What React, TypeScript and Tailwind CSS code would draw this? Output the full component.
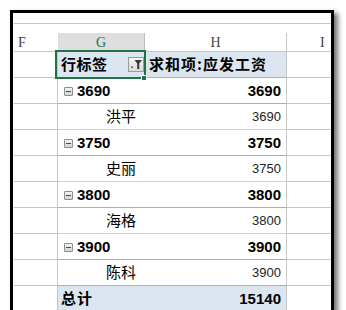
import React from "react";

type Row = { label: string; value: string; kind: "group" | "item" | "total" };

const rows: Row[] = [
  { label: "3690", value: "3690", kind: "group" },
  { label: "洪平", value: "3690", kind: "item" },
  { label: "3750", value: "3750", kind: "group" },
  { label: "史丽", value: "3750", kind: "item" },
  { label: "3800", value: "3800", kind: "group" },
  { label: "海格", value: "3800", kind: "item" },
  { label: "3900", value: "3900", kind: "group" },
  { label: "陈科", value: "3900", kind: "item" },
  { label: "总计", value: "15140", kind: "total" },
];

const cjk = "font-['Noto_Sans_CJK_SC',sans-serif]";

function MinusBox() {
  return (
    <span className="mr-[4px] flex h-[9px] w-[9px] items-center justify-center rounded-[1px] border border-[#8d8d8d] bg-gradient-to-b from-[#f2f2f2] to-[#d4d4d4]">
      <span className="h-[1px] w-[5px] bg-[#4a4a4a]" />
    </span>
  );
}

function FilterButton() {
  return (
    <span className="flex h-[15px] w-[16px] items-center justify-center border border-[#9b9b9b] bg-gradient-to-b from-[#f6f6f6] to-[#dadada]">
      <svg width="14" height="13" viewBox="0 0 14 13">
        <path d="M1.5 8.5 L4.5 8.5 L3 10.5 Z" fill="#555" />
        <path d="M5.5 2 L13 2 L10.3 5.5 L10.3 11 L8.2 11 L8.2 5.5 Z" fill="#3c3c3c" />
      </svg>
    </span>
  );
}

export default function App() {
  return (
    <div className="h-[310px] w-[346px] overflow-hidden bg-white">
      <div className="ml-[10px] mt-[10px] w-[324px] border-l-[3px] border-r-[3px] border-t-[3px] border-black bg-white shadow-[4px_3px_5px_rgba(0,0,0,0.55)]">
        {/* formula bar gap */}
        <div className="h-[11px] border-b border-[#c6c6c6]" />
        <div className="h-[9px]" />

        {/* column headers */}
        <div className="flex h-[19px] border-b border-[#c6c6c6] font-['Liberation_Serif',serif] text-[14px] text-[#444]">
          <div className="flex w-[45px] items-center pl-[5px]">F</div>
          <div className="flex w-[87px] items-center justify-center border-r border-[#bdbdbd] bg-[#dedede] text-[#217346]">G</div>
          <div className="flex w-[142px] items-center justify-center border-r border-[#c6c6c6]">H</div>
          <div className="flex w-[44px] items-center pl-[33px]">I</div>
        </div>

        {/* pivot header row */}
        <div className={`relative flex h-[26px] ${cjk} text-[15px] font-bold text-black`}>
          <div className="w-[45px] border-b border-r border-[#c6c6c6]" />
          <div className="flex w-[87px] items-center justify-between border-b border-[#95b3d7] bg-[#dce6f1] pl-[3px] pr-[1px] tracking-[0.5px]">
            <span>行标签</span>
            <FilterButton />
          </div>
          <div className="flex w-[142px] items-center border-b border-r border-[#95b3d7] border-r-[#c6c6c6] bg-[#dce6f1] pl-[4px] tracking-[1px]">
            求和项:应发工资
          </div>
          <div className="w-[44px] border-b border-[#c6c6c6]" />
          <div className="absolute left-[42px] top-[-2px] h-[29px] w-[91px] border-2 border-[#217346]" />
          <div className="absolute left-[128px] top-[23px] h-[6px] w-[6px] border border-white bg-[#217346]" />
        </div>

        {rows.map((r, i) => {
          const line = r.kind === "item" && i !== 7 ? "border-[#d0d0d0]" : "border-[#95b3d7]";
          const bg = r.kind === "total" ? "bg-[#dce6f1]" : "bg-white";
          return (
            <div key={i} className="flex h-[26px]">
              <div className="w-[45px] border-b border-r border-[#c6c6c6]" />
              <div className={`flex w-[229px] items-center justify-between border-b border-r border-r-[#c6c6c6] ${line} ${bg} pr-[5px]`}>
                {r.kind === "group" && (
                  <span className="flex items-center pl-[6px] pt-[2px] font-['Liberation_Sans',sans-serif] text-[15px] font-bold">
                    <MinusBox />
                    {r.label}
                  </span>
                )}
                {r.kind === "item" && (
                  <span className={`pl-[48px] ${cjk} text-[15px] text-black`}>{r.label}</span>
                )}
                {r.kind === "total" && (
                  <span className={`pl-[3px] ${cjk} text-[15px] font-bold tracking-[1px]`}>{r.label}</span>
                )}
                {r.kind === "item" ? (
                  <span className="font-['Liberation_Sans',sans-serif] text-[13px] text-[#222]">{r.value}</span>
                ) : (
                  <span className="pt-[2px] font-['Liberation_Sans',sans-serif] text-[15px] font-bold">{r.value}</span>
                )}
              </div>
              <div className="w-[44px] border-b border-[#c6c6c6]" />
            </div>
          );
        })}
      </div>
    </div>
  );
}
